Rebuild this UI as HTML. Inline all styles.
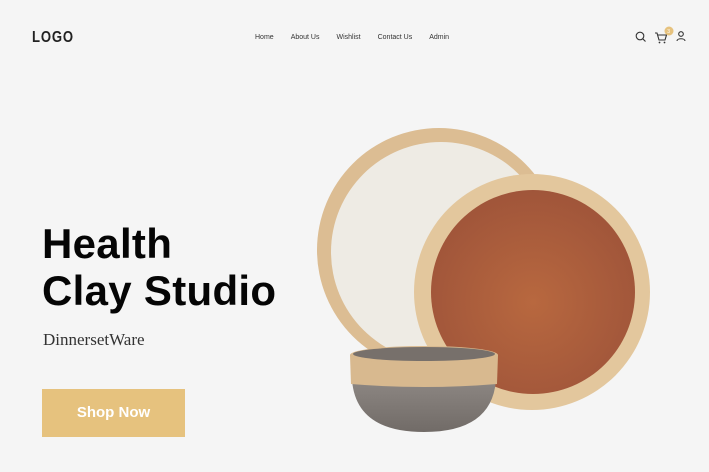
<!DOCTYPE html>
<html><head><style>
*{margin:0;padding:0;box-sizing:border-box}
body{width:709px;height:472px;background:#f5f5f5;position:relative;overflow:hidden;font-family:"Liberation Sans",sans-serif}
.logo{position:absolute;left:32px;top:29px;font-size:16px;font-weight:bold;letter-spacing:1px;color:#222;transform:scaleX(0.82);transform-origin:left}
.nav{position:absolute;top:34px;font-size:7px;color:#333;left:255px}
.nav span{margin-right:17px}
h1{position:absolute;left:42px;top:220px;font-size:42px;line-height:47px;font-weight:bold;color:#050505;letter-spacing:0.3px}
.sub{position:absolute;left:43px;top:330px;font-family:"Liberation Serif",serif;font-size:17px;color:#333}
.btn{position:absolute;left:42px;top:389px;width:143px;height:48px;background:#e6c27e;color:#fff;font-size:15px;font-weight:bold;text-align:center;line-height:48px}
</style></head><body>
<div class="logo">LOGO</div>
<div class="nav"><span>Home</span><span>About Us</span><span>Wishlist</span><span>Contact Us</span><span>Admin</span></div>
<svg style="position:absolute;left:630px;top:26px" width="60" height="22" viewBox="0 0 60 22">
<circle cx="10" cy="10" r="3.8" fill="none" stroke="#333" stroke-width="1.1"/><line x1="12.8" y1="12.8" x2="15.5" y2="15.5" stroke="#333" stroke-width="1.1"/>
<path d="M25 7h2l2 7h6l1.5-5H28" fill="none" stroke="#333" stroke-width="1.1"/><circle cx="29.5" cy="16.5" r="0.9" fill="#333"/><circle cx="34.5" cy="16.5" r="0.9" fill="#333"/>
<circle cx="39" cy="5" r="4.5" fill="#e6c27e"/><text x="37.3" y="7" font-size="5" fill="#fff" font-family="Liberation Sans">3</text>
<circle cx="51" cy="8" r="2.3" fill="none" stroke="#333" stroke-width="1.1"/><path d="M47 15c0-3 8-3 8 0" fill="none" stroke="#333" stroke-width="1.1"/>
</svg>
<h1>Health<br>Clay Studio</h1>
<div class="sub">DinnersetWare</div>
<div class="btn">Shop Now</div>
<svg style="position:absolute;left:0;top:0" width="709" height="472">
<defs>
<radialGradient id="br" cx="0.5" cy="0.55" r="0.55"><stop offset="0" stop-color="#b8683f"/><stop offset="1" stop-color="#a0553a"/></radialGradient>
<linearGradient id="bw" x1="0" y1="0" x2="0" y2="1"><stop offset="0" stop-color="#8d8783"/><stop offset="1" stop-color="#716b67"/></linearGradient>
</defs>
<circle cx="439" cy="250" r="122" fill="#dcbd93"/>
<circle cx="441" cy="252" r="110" fill="#eeebe4"/>
<circle cx="532" cy="292" r="118" fill="#e3c79d"/>
<circle cx="533" cy="292" r="102" fill="url(#br)"/>
<path d="M352 380 Q356 432 424 432 Q492 432 496 380 Z" fill="url(#bw)"/>
<path d="M350 355 L498 355 L497 384 Q424 390 351 384 Z" fill="#d8b98f"/>
<ellipse cx="424" cy="355" rx="74" ry="9" fill="#d8b98f"/>
<ellipse cx="424" cy="354" rx="71" ry="7" fill="#77706b"/>
</svg>
</body></html>
